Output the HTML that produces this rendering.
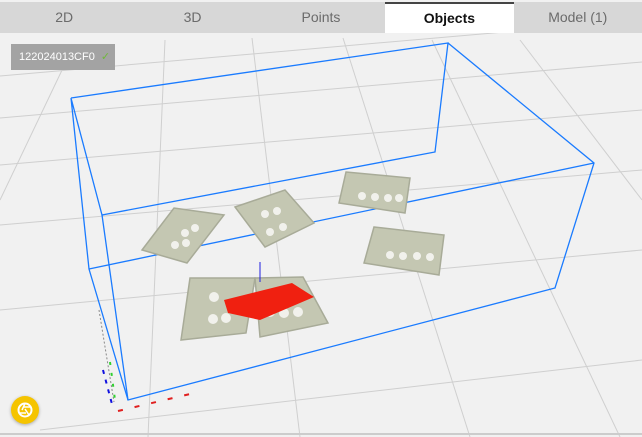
<!DOCTYPE html>
<html><head><style>
body{margin:0;width:642px;height:437px;overflow:hidden;background:#f1f1f1;font-family:"Liberation Sans",sans-serif}
.bar{position:absolute;top:2px;left:0;width:642px;height:31px;background:#d7d7d7;display:flex}
.bar div{width:128.4px;text-align:center;line-height:31px;font-size:14px;color:#6b6b6b}
.bar .a{background:#fff;color:#111;font-weight:bold;border-top:2px solid #444;line-height:29px}
.lbl{position:absolute;left:11px;top:44px;width:104px;height:26px;background:#a3a3a3;color:#fff;font-size:11px;line-height:26px;padding-left:8px;box-sizing:border-box}
.lbl span{color:#6fb83a;margin-left:6px}
.btn{position:absolute;left:11px;top:396px;width:28px;height:28px;border-radius:50%;background:#f5c400;box-shadow:0 1px 3px rgba(0,0,0,.3)}
</style></head><body>
<svg width="642" height="437" style="position:absolute;left:0;top:0">
<g stroke="#cfcfcf" stroke-width="1" fill="none">
<line x1="0" y1="76" x2="642" y2="20"/><line x1="0" y1="118" x2="642" y2="62"/>
<line x1="0" y1="165" x2="642" y2="110"/><line x1="0" y1="225" x2="642" y2="170"/>
<line x1="0" y1="310" x2="642" y2="250"/><line x1="40" y1="430" x2="642" y2="360"/>
<line x1="165" y1="40" x2="148" y2="437"/><line x1="252" y1="38" x2="300" y2="437"/>
<line x1="343" y1="38" x2="470" y2="437"/><line x1="432" y1="40" x2="620" y2="437"/>
<line x1="520" y1="40" x2="642" y2="200"/><line x1="74" y1="45" x2="0" y2="200"/>
</g>
<g stroke="#1a7bff" stroke-width="1.3" fill="none">
<polyline points="71,98 448,43 435,152 102,215 71,98 89,269 128,400 555,288 594,163 448,43"/>
<line x1="89" y1="269" x2="594" y2="163"/>
<line x1="102" y1="215" x2="128" y2="400"/>
</g>
<line x1="0" y1="434" x2="642" y2="434" stroke="#ccc" stroke-width="2"/>
<g fill="#c4c7b2" stroke="#a8ab98" stroke-width="1.5">
<polygon points="142,250 174,208 224,215 187,263"/>
<polygon points="235,207 285,190 314,223 265,247"/>
<polygon points="346,172 410,178 405,213 339,203"/>
<polygon points="374,227 444,235 439,275 364,263"/>
<polygon points="190,278 255,278 246,333 181,340"/>
<polygon points="255,278 303,277 328,323 260,337"/>
</g>
<g fill="#f1f1ec">
<circle cx="185" cy="233" r="4"/><circle cx="195" cy="228" r="4"/><circle cx="175" cy="245" r="4"/><circle cx="186" cy="243" r="4"/>
<circle cx="265" cy="214" r="4"/><circle cx="277" cy="211" r="4"/><circle cx="270" cy="232" r="4"/><circle cx="283" cy="227" r="4"/>
<circle cx="362" cy="196" r="4"/><circle cx="375" cy="197" r="4"/><circle cx="388" cy="198" r="4"/><circle cx="399" cy="198" r="4"/>
<circle cx="390" cy="255" r="4"/><circle cx="403" cy="256" r="4"/><circle cx="417" cy="256" r="4"/><circle cx="430" cy="257" r="4"/>
<circle cx="214" cy="297" r="5"/><circle cx="213" cy="319" r="5"/><circle cx="226" cy="318" r="5"/>
<circle cx="270" cy="312" r="5"/><circle cx="284" cy="313" r="5"/><circle cx="298" cy="312" r="5"/>
</g>
<polygon points="224,300 292,283 314,297 260,320 228,313" fill="#f02010"/>
<g stroke-width="2" fill="none">
<line x1="99" y1="310" x2="114" y2="402" stroke="#888" stroke-width="1" stroke-dasharray="2,2"/>
<line x1="103" y1="370" x2="113" y2="408" stroke="#1010e0" stroke-dasharray="4,6"/>
<line x1="110" y1="362" x2="115" y2="400" stroke="#30d030" stroke-dasharray="3,8"/>
<line x1="118" y1="411" x2="190" y2="394" stroke="#e02020" stroke-dasharray="5,12"/>
<line x1="260" y1="262" x2="260" y2="282" stroke="#2020e0" stroke-width="1"/>
</g>
</svg>
<div class="bar"><div>2D</div><div>3D</div><div>Points</div><div class="a">Objects</div><div>Model (1)</div></div>
<div class="lbl">122024013CF0<span>✓</span></div>
<div class="btn"><svg width="28" height="28"><circle cx="14" cy="14" r="6.5" fill="none" stroke="#fff" stroke-width="2"/><path d="M14 7.5L11 14M20 11L13 11M18 19L14 13M8.5 17L15 17" stroke="#fff" stroke-width="1.5"/></svg></div>
</body></html>
